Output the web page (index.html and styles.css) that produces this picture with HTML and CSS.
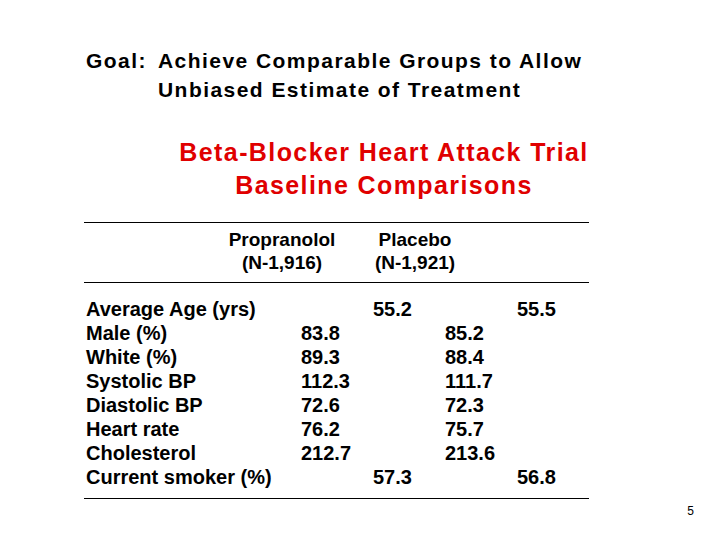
FILE: index.html
```html
<!DOCTYPE html>
<html lang="en">
<head>
<meta charset="utf-8">
<title>Beta-Blocker Heart Attack Trial</title>
<link rel="stylesheet" href="styles.css">
</head>
<body>
<div class="slide">
  <div class="goal">
    <div class="goal-label">Goal:</div>
    <div class="goal-text">Achieve Comparable Groups to Allow<br>Unbiased Estimate of Treatment</div>
  </div>
  <div class="title">Beta-Blocker Heart Attack Trial<br>Baseline Comparisons</div>
  <div class="table">
    <div class="head">
      <div class="hcell"></div>
      <div class="hcell">Propranolol<br>(N-1,916)</div>
      <div class="hcell">Placebo<br>(N-1,921)</div>
    </div>
    <div class="body">
      <div class="row"><span>Average Age (yrs)</span><span></span><span>55.2</span><span></span><span>55.5</span></div>
      <div class="row"><span>Male (%)</span><span>83.8</span><span></span><span>85.2</span><span></span></div>
      <div class="row"><span>White (%)</span><span>89.3</span><span></span><span>88.4</span><span></span></div>
      <div class="row"><span>Systolic BP</span><span>112.3</span><span></span><span>111.7</span><span></span></div>
      <div class="row"><span>Diastolic BP</span><span>72.6</span><span></span><span>72.3</span><span></span></div>
      <div class="row"><span>Heart rate</span><span>76.2</span><span></span><span>75.7</span><span></span></div>
      <div class="row"><span>Cholesterol</span><span>212.7</span><span></span><span>213.6</span><span></span></div>
      <div class="row"><span>Current smoker (%)</span><span></span><span>57.3</span><span></span><span>56.8</span></div>
    </div>
  </div>
  <div class="page-num">5</div>
</div>
</body>
</html>
```

FILE: styles.css
```css
html, body {
  margin: 0;
  padding: 0;
  background: #ffffff;
}

.slide {
  width: 720px;
  height: 540px;
  overflow: hidden;
  font-family: "Liberation Sans", Arial, sans-serif;
  font-weight: bold;
  color: #000000;
}

.goal {
  display: flex;
  padding-top: 46px;
  padding-left: 86px;
  font-size: 21px;
  line-height: 29px;
  letter-spacing: 1.45px;
}

.goal-label {
  width: 72px;
  flex: none;
}

.title {
  margin-top: 32px;
  margin-left: 48px;
  text-align: center;
  color: #e00000;
  font-size: 25px;
  line-height: 33px;
  letter-spacing: 1.4px;
}

.table {
  margin-top: 20px;
  margin-left: 84px;
  width: 505px;
}

.head {
  display: grid;
  grid-template-columns: 133px 130px 136px;
  border-top: 1px solid #000000;
  border-bottom: 1px solid #000000;
  padding-top: 5px;
  padding-bottom: 8px;
  font-size: 19px;
  line-height: 23px;
}

.hcell {
  text-align: center;
}

.body {
  padding-top: 14px;
  padding-bottom: 9px;
  padding-left: 2px;
  border-bottom: 1px solid #000000;
  font-size: 20px;
  line-height: 24px;
}

.row {
  display: grid;
  grid-template-columns: 215px 72px 72px 72px 72px;
  white-space: nowrap;
}

.page-num {
  margin-top: 5px;
  padding-right: 26px;
  text-align: right;
  font-weight: normal;
  font-size: 12px;
  line-height: 14px;
}
```
